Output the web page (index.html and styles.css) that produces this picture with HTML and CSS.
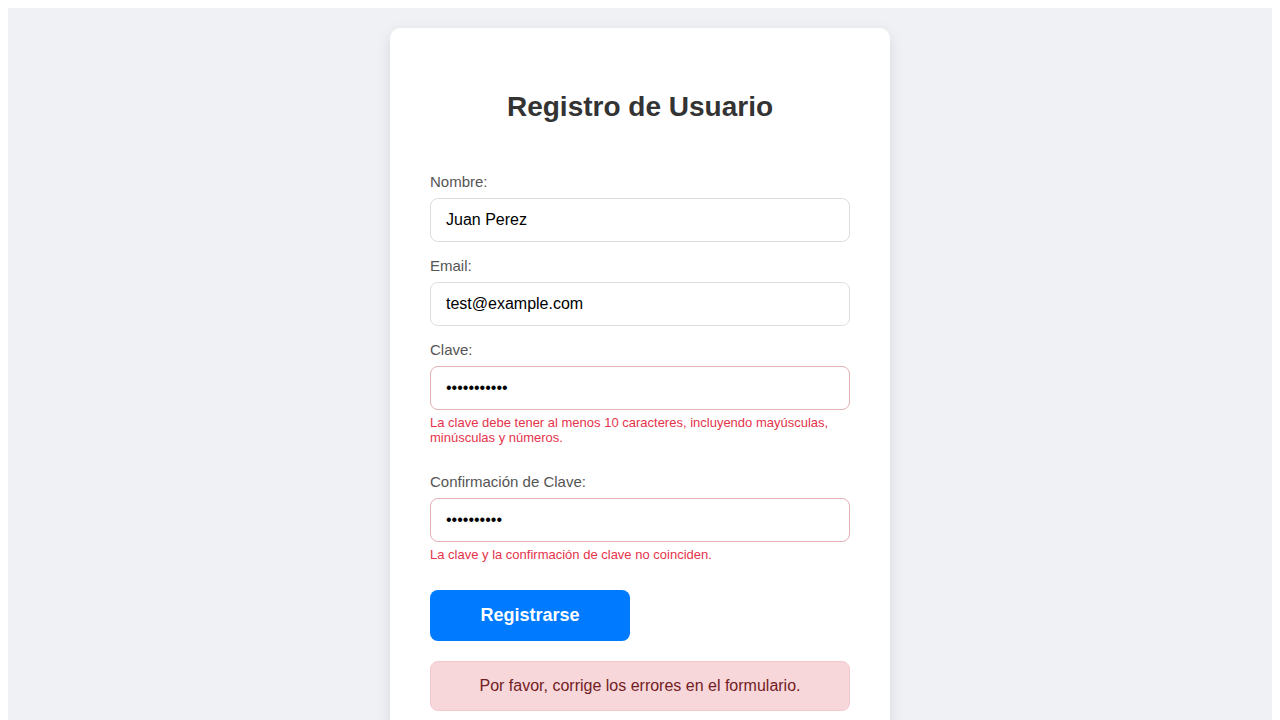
FILE: index.html
```html
<!DOCTYPE html>
<html lang="es">
<head>
<meta charset="utf-8">
<title>Registro de Usuario</title>
<link rel="stylesheet" href="styles.css">
</head>
<body>
<div class="page">
  <div class="card">
    <h2 class="title">Registro de Usuario</h2>
    <form class="form">
      <div class="group">
        <label class="label" for="nombre">Nombre:</label>
        <input class="input" id="nombre" type="text" value="Juan Perez">
      </div>
      <div class="group">
        <label class="label" for="email">Email:</label>
        <input class="input" id="email" type="text" value="test@example.com">
      </div>
      <div class="group">
        <label class="label" for="clave">Clave:</label>
        <input class="input input-error" id="clave" type="password" value="abcdefghijk">
        <div class="error">La clave debe tener al menos 10 caracteres, incluyendo mayúsculas, minúsculas y números.</div>
      </div>
      <div class="group">
        <label class="label" for="conf">Confirmación de Clave:</label>
        <input class="input input-error" id="conf" type="password" value="abcdefghij">
        <div class="error">La clave y la confirmación de clave no coinciden.</div>
      </div>
      <button class="btn" type="button">Registrarse</button>
      <div class="alert">Por favor, corrige los errores en el formulario.</div>
    </form>
  </div>
</div>
</body>
</html>
```
FILE: styles.css
```css
html, body {
  margin: 0;
  padding: 0;
}
body {
  margin: 8px;
  font-family: "Liberation Sans", Arial, sans-serif;
  background: #ffffff;
}
.page {
  background: #f0f1f5;
  min-height: 800px;
  display: flex;
  justify-content: center;
  align-items: flex-start;
  padding-top: 20px;
}
.card {
  width: 500px;
  box-sizing: border-box;
  background: #ffffff;
  border-radius: 10px;
  box-shadow: 0 4px 14px rgba(0, 0, 0, 0.1);
  padding: 40px;
}
.title {
  margin: 23px 0 50px;
  text-align: center;
  font-size: 28px;
  font-weight: bold;
  color: #333333;
  line-height: 32px;
}
.form {
  display: flex;
  flex-direction: column;
}
.group {
  display: flex;
  flex-direction: column;
  margin-bottom: 15px;
}
.label {
  font-size: 15px;
  line-height: 17px;
  color: #555555;
  margin-bottom: 8px;
}
.input {
  box-sizing: border-box;
  width: 100%;
  height: 44px;
  padding: 12px 15px;
  border: 1px solid #dddddd;
  border-radius: 8px;
  font-family: "Liberation Sans", Arial, sans-serif;
  font-size: 16px;
  color: #000000;
  background: #ffffff;
  outline: none;
}
.input-error {
  border-color: #e3b0b6;
}
.error {
  color: #e5334b;
  font-size: 13px;
  line-height: 15px;
  margin-top: 5px;
  margin-bottom: 13px;
}
.btn {
  width: 200px;
  height: 51px;
  background: #007bff;
  color: #ffffff;
  border: none;
  border-radius: 8px;
  font-family: "Liberation Sans", Arial, sans-serif;
  font-size: 18px;
  font-weight: bold;
  cursor: pointer;
}
.alert {
  margin-top: 20px;
  padding: 15px;
  background: #f8d7da;
  border: 1px solid #f5c6cb;
  border-radius: 8px;
  color: #721c24;
  font-size: 16px;
  line-height: 18px;
  text-align: center;
}
```
